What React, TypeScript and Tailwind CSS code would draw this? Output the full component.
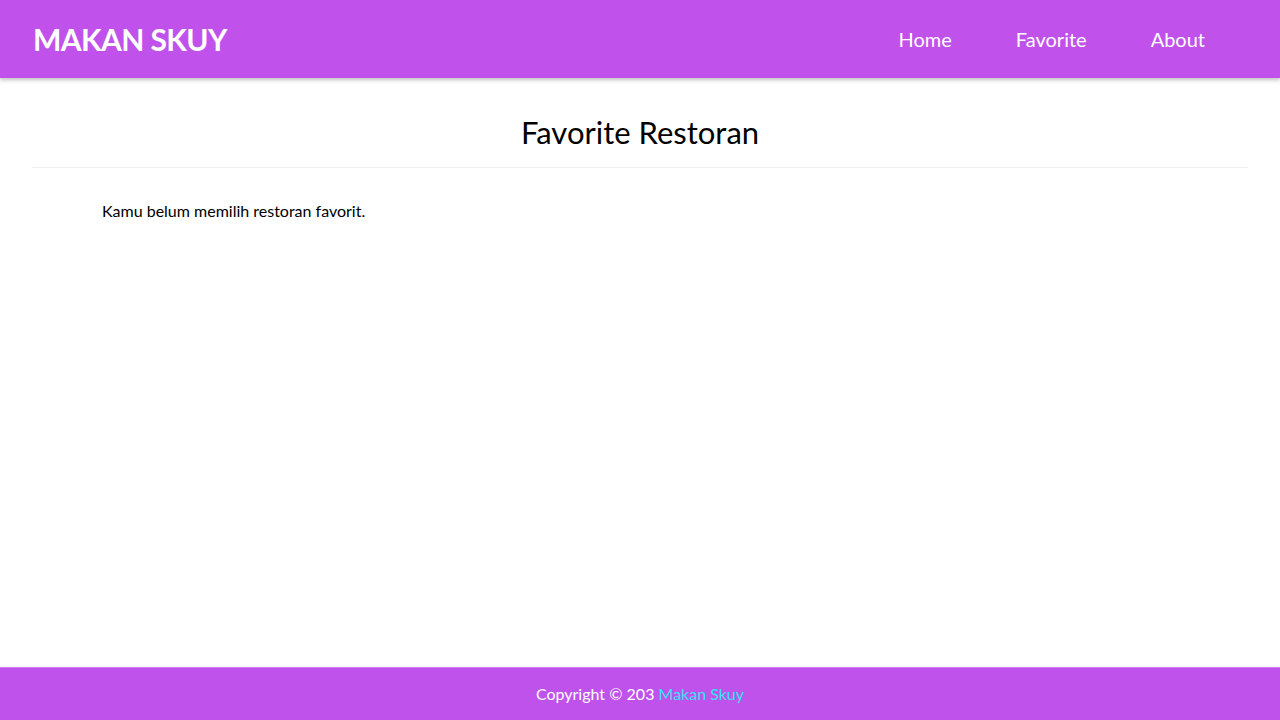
import React from "react";

const navLinks = ["Home", "Favorite", "About"];

const App = () => {
  return (
    <div className="flex min-h-screen flex-col bg-white font-['Lato','Noto_Sans',sans-serif] text-black">
      <header className="flex h-[78px] items-center justify-between bg-[#c052eb] pl-[33px] pr-[75px] shadow-[0_2px_4px_rgba(0,0,0,0.25)]">
        <a href="#" className="text-[30px] font-bold leading-none tracking-[-0.02em] text-white">
          MAKAN SKUY
        </a>
        <nav className="flex items-center gap-[64px]">
          {navLinks.map((link) => (
            <a key={link} href="#" className="text-[20px] text-white">
              {link}
            </a>
          ))}
        </nav>
      </header>

      <main className="flex-1 px-[32px]">
        <h2 className="border-b border-[#f0f0f0] pb-[13px] pt-[32px] text-center text-[31px] leading-[44px]">
          Favorite Restoran
        </h2>
        <p className="px-[70px] pt-[31px] text-[16px]">
          Kamu belum memilih restoran favorit.
        </p>
      </main>

      <footer className="flex h-[53px] items-center justify-center border-t border-[#d47cf2] bg-[#bf52ea] text-[16px] text-white">
        <p>
          Copyright © 203{" "}
          <a href="#" className="text-[#2ee6fa]">
            Makan Skuy
          </a>
        </p>
      </footer>
    </div>
  );
};

export default App;
